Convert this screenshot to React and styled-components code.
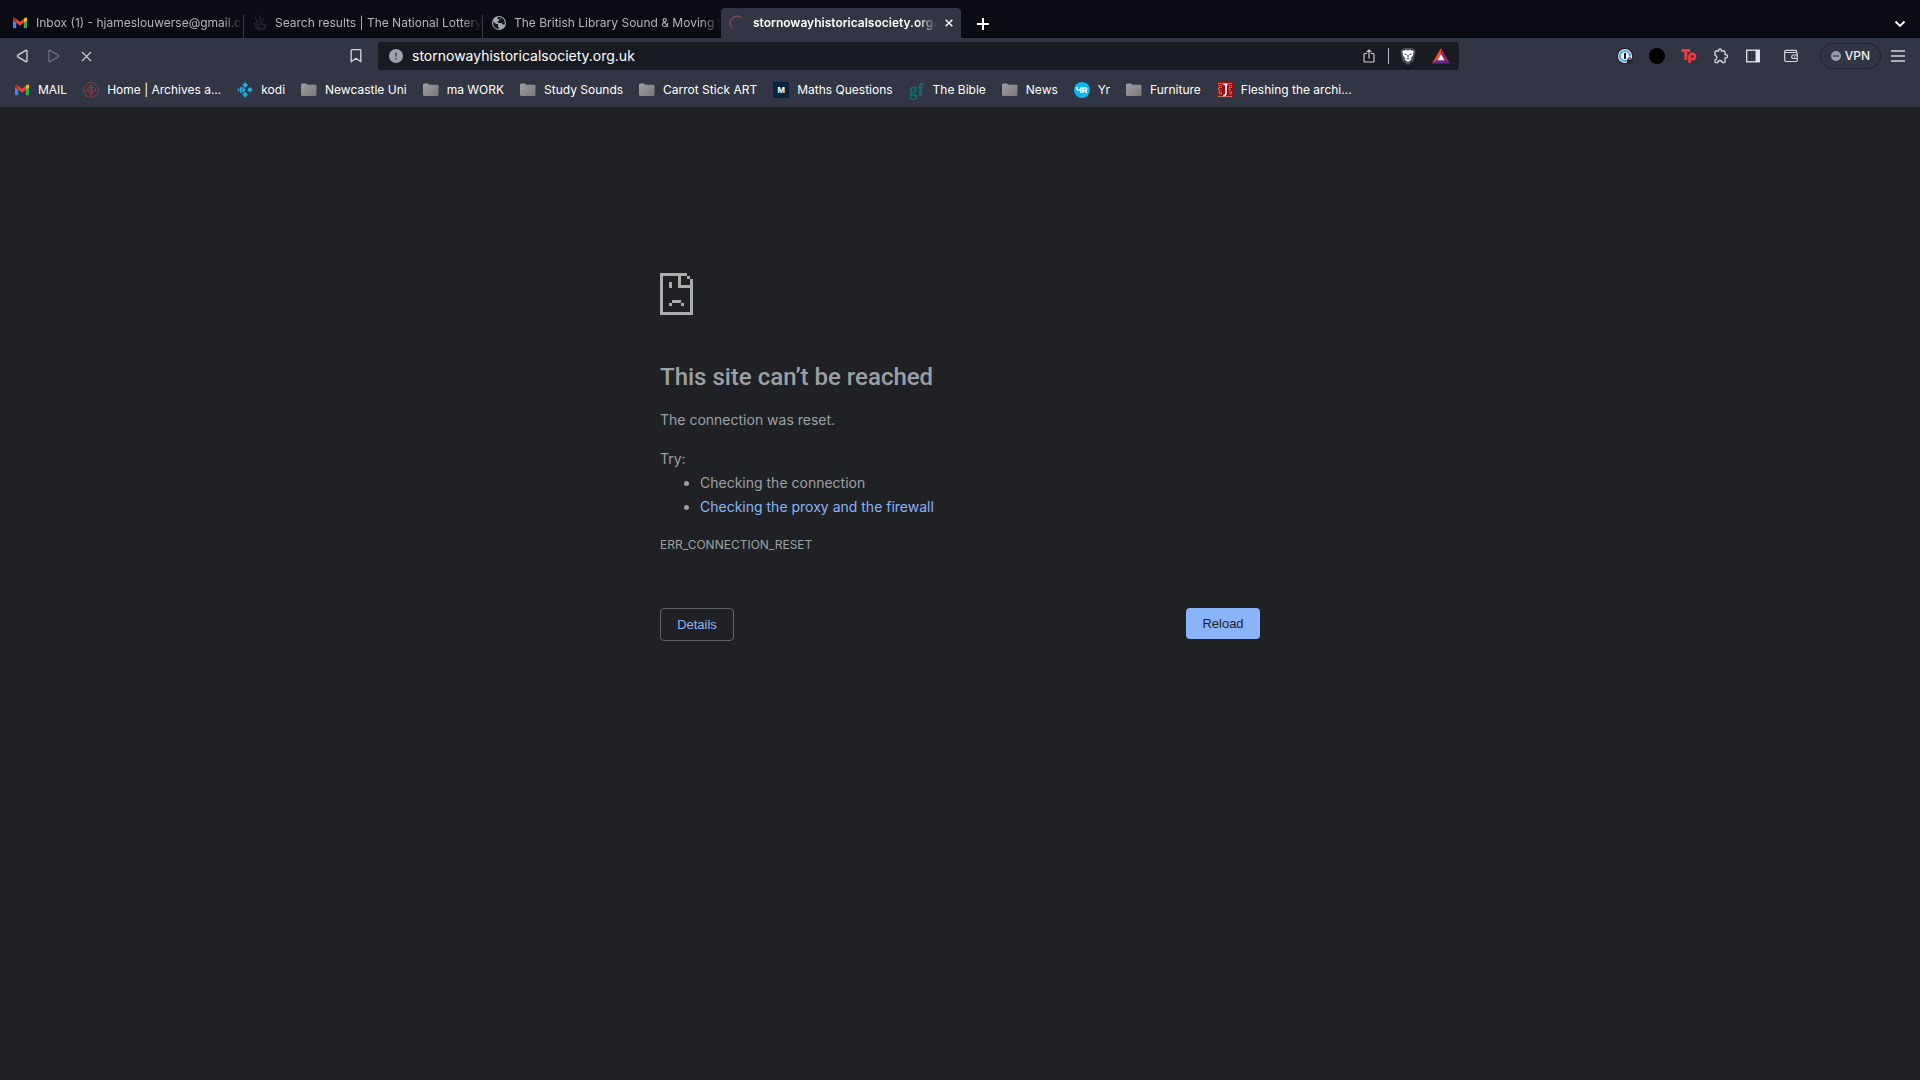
import React from "react";
import styled, { createGlobalStyle } from "styled-components";

const GlobalStyle = createGlobalStyle`
  body {
    margin: 0;
    background: #202124;
    font-family: Inter, "Liberation Sans", sans-serif;
  }
`;

const Browser = styled.div`
  display: flex;
  flex-direction: column;
  min-height: 100vh;

  svg {
    display: block;
    flex: none;
  }
`;

const IconButton = styled.button`
  display: flex;
  align-items: center;
  justify-content: center;
  width: ${(props) => props.$width || 32}px;
  height: 28px;
  padding: 0;
  border: 0;
  background: none;
  color: ${(props) => props.$color || "#d5d6db"};
`;

const TabStrip = styled.div`
  display: flex;
  align-items: flex-end;
  height: 38px;
  padding: 0 4px;
  background: #0b0b14;
`;

const Tab = styled.div`
  display: flex;
  align-items: center;
  box-sizing: border-box;
  flex: 0 1 ${(props) => (props.$active ? 240 : 239)}px;
  min-width: 0;
  height: ${(props) => (props.$active ? 30 : 23)}px;
  padding: ${(props) => (props.$active ? "0 0 0 8px" : "0 0 7px 8px")};
  border-left: ${(props) => (props.$divided ? 1 : 0)}px solid #3a3b42;
  border-radius: ${(props) => (props.$active ? "4px 4px 0 0" : "0")};
  background: ${(props) => (props.$active ? "#323543" : "transparent")};
`;

const TabTitle = styled.button`
  flex: 1;
  min-width: 0;
  margin-left: ${(props) => (props.$divided ? 7 : 8)}px;
  padding: 0;
  border: 0;
  background: none;
  color: ${(props) => (props.$active ? "#ffffff" : "#b4b4b9")};
  font: ${(props) => (props.$active ? 600 : 400)} 12px/16px Inter, sans-serif;
  text-align: left;
  white-space: nowrap;
  overflow: hidden;
  mask-image: linear-gradient(to left, transparent, #000 20px);
`;

const Spacer = styled.div`
  flex: 1;
`;

const Toolbar = styled.div`
  display: grid;
  grid-template-columns: 378px 1fr 461px;
  align-items: center;
  height: 36px;
  background: #323543;
`;

const ToolGroup = styled.div`
  display: flex;
  align-items: center;
  justify-content: ${(props) => (props.$end ? "flex-end" : "flex-start")};
  padding: ${(props) => (props.$end ? "0 8px 0 0" : "0 6px")};
`;

const AddressBar = styled.div`
  display: flex;
  align-items: center;
  height: 28px;
  padding: 0 1px 0 11px;
  border-radius: 4px;
  background: #191b22;
`;

const AddressInput = styled.input`
  flex: 1;
  min-width: 0;
  padding: 0;
  margin-left: 9px;
  border: 0;
  outline: 0;
  background: none;
  color: #ffffff;
  font: 400 14px/20px Inter, sans-serif;
`;

const Divider = styled.div`
  width: 1px;
  height: 16px;
  margin: 0 3px;
  background: #b6b7bc;
`;

const VpnButton = styled.button`
  display: flex;
  align-items: center;
  gap: 4px;
  height: 26px;
  margin: 0 3px 0 7px;
  padding: 0 10px;
  border: 1px solid #222430;
  border-radius: 13px;
  background: none;
  color: #f0f0f4;
  font: 500 12px/16px Inter, sans-serif;
`;

const BookmarkBar = styled.nav`
  display: flex;
  align-items: center;
  box-sizing: border-box;
  gap: 16px;
  height: 33px;
  padding: 0 14px 2px;
  background: #323543;
`;

const Bookmark = styled.a`
  display: flex;
  align-items: center;
  gap: 8px;
  color: #ffffff;
  font-size: 12px;
  line-height: 16px;
  text-decoration: none;
  white-space: nowrap;
`;

const ErrorPage = styled.main`
  box-sizing: border-box;
  width: 100%;
  max-width: 600px;
  margin: 0 auto;
  padding-top: 166px;
  color: #9aa0a6;
  font-size: 14px;
  line-height: 24px;
`;

const Title = styled.h1`
  margin: 48px 0 17px;
  font-family: Roboto, sans-serif;
  font-size: 24px;
  font-weight: 500;
  line-height: 28px;
`;

const Message = styled.p`
  margin: 0;
`;

const Suggestions = styled.div`
  margin-top: 15px;

  ul {
    margin: 0;
    padding-left: 40px;
  }

  a {
    color: #8ab4f8;
    text-decoration: none;
  }
`;

const ErrorCode = styled.div`
  margin-top: 16px;
  font-size: 12px;
  line-height: 20px;
`;

const Actions = styled.div`
  display: flex;
  align-items: flex-start;
  justify-content: space-between;
  margin-top: 53px;
`;

const ActionButton = styled.button`
  box-sizing: border-box;
  width: 74px;
  height: ${(props) => (props.$primary ? 31 : 33)}px;
  padding: 0;
  border: ${(props) => (props.$primary ? "0" : "1px solid #5f6368")};
  border-radius: 4px;
  background: ${(props) => (props.$primary ? "#8ab4f8" : "transparent")};
  color: ${(props) => (props.$primary ? "#202124" : "#8ab4f8")};
  font: 400 13px/16px "Liberation Sans", Arial, sans-serif;
`;

const Gmail = () => (
  <svg width="16" height="16" viewBox="0 0 16 16">
    <path d="M1 4v8.500q0 .8.800.8H4.200V7z" fill="#4285f4" />
    <path d="M15 4v8.500q0 .8-.800.8H11.800V7z" fill="#34a853" />
    <path d="M11.800 3.800v4L15 5.400V4q0-1.900-1.900-1.200z" fill="#fbbc04" />
    <path d="M4.200 3.800v4L1 5.400V4q0-1.900 1.900-1.200z" fill="#c5221f" />
    <path d="M4.200 3.800 8 6.700l3.800-2.900v4L8 10.700 4.200 7.800z" fill="#ea4335" />
  </svg>
);

const Lottery = () => (
  <svg width="16" height="16" viewBox="0 0 16 16" fill="none" stroke="#24242b" strokeWidth="1.400" strokeLinecap="round">
    <path d="M5 8 3.500 2.500M7 7.500 8.500 1M9 8l2.500-4.500M2 8.500l3 1.500M13.500 9.500c0 3.500-2 5.500-5 5.500S4 13.500 3 11.500M6 10.500q2-2.500 5-1t1 3.500q-2 .8-4-.5M5 12l2.500 1" />
  </svg>
);

const Globe = () => (
  <svg width="16" height="16" viewBox="0 0 16 16">
    <circle cx="8" cy="8" r="7" fill="#a5a9b1" />
    <path d="M2.500 6.500 5 9h2v2.500l1.500 2.300C4 14.200 1.500 11 2.500 6.500zM6 3.500c.5-1.200 2-1.700 3.500-1.300l.5 1.600-2 1v1.500H6.500L7 8h3.500l1 1.500h2.200C14.400 6 12.500 3 10 2.200L8.500 4.500z" fill="#16161f" />
  </svg>
);

const Spinner = () => (
  <svg width="16" height="16" viewBox="0 0 16 16" fill="none">
    <path d="M3.600 13.500A7 7 0 0 1 12.500 2.700" stroke="#84454f" strokeWidth="1.400" />
  </svg>
);

const Cross = ({ size, width }) => (
  <svg width={size} height={size} viewBox="0 0 10 10" stroke="currentColor" strokeWidth={width}>
    <path d="M.8.8l8.400 8.400M9.200.8.8 9.200" />
  </svg>
);

const Plus = () => (
  <svg width="12" height="12" viewBox="0 0 12 12" stroke="#fff" strokeWidth="2">
    <path d="M6 0v12M0 6h12" />
  </svg>
);

const Chevron = () => (
  <svg width="12" height="8" viewBox="0 0 12 8" fill="none" stroke="#fff" strokeWidth="1.800">
    <path d="M1.500 1.500 6 6l4.500-4.500" />
  </svg>
);

const Triangle = ({ forward }) => (
  <svg width="12" height="14" viewBox="0 0 12 14" fill="none" stroke="currentColor" strokeWidth="1.300" strokeLinejoin="round">
    {forward ? (
      <path d="M1 2q0-1.200 1.100-.6l8 4.700q1.100.9 0 1.800l-8 4.700Q1 13.200 1 12z" />
    ) : (
      <path d="M11 2q0-1.200-1.100-.6l-8 4.700q-1.100.9 0 1.800l8 4.700q1.100.6 1.100-.6z" />
    )}
  </svg>
);

const BookmarkIcon = () => (
  <svg width="12" height="14" viewBox="0 0 12 14" fill="none" stroke="currentColor" strokeWidth="1.300">
    <path d="M1.200 1.500q0-.8.800-.8h8q.8 0 .8.800v11.300L6 9.300l-4.800 3.500z" strokeLinejoin="round" />
  </svg>
);

const Info = () => (
  <svg width="14" height="14" viewBox="0 0 14 14">
    <circle cx="7" cy="7" r="7" fill="#a0a1aa" />
    <path d="M7 3.500v4M7 9v1.500" stroke="#4c4e59" strokeWidth="1.600" />
  </svg>
);

const Share = () => (
  <svg width="12" height="14" viewBox="0 0 12 14" fill="none" stroke="currentColor" strokeWidth="1.100">
    <path d="M4 4.500H2q-1 0-1 1V12q0 1 1 1h8q1 0 1-1V5.500q0-1-1-1H8M6 9.500V1M3.800 3 6 .9 8.200 3" />
  </svg>
);

const Shield = () => (
  <svg width="16" height="18" viewBox="0 0 16 18">
    <path d="M4 1h8l1.300 1.300 1.700.4.500 2.300-1.700 7.500q-.5 1.500-1.800 2.400L8 17.700l-4-2.800q-1.300-.9-1.800-2.400L.5 5 1 2.700l1.700-.4z" fill="#4f5163" />
    <path d="M5.500 3 8 3.500 10.500 3l1.300.7 1.400-.1.500 1.600-.8 1.700.2 1.600-2.300 2.500.4 1.500L8 15l-3.200-2.500.4-1.500-2.300-2.500.2-1.600-.8-1.700.5-1.600 1.400.1z" fill="#fff" />
    <path d="m4.300 6.300 2.600.7-.6 1.300-1.400-.5zM11.700 6.300 9.100 7l.6 1.300 1.400-.5zM7.300 8h1.400v2.200L8 10.700l-.7-.5zM6 11.700l2-.8 2 .8-2 .8z" fill="#5a5c6c" />
  </svg>
);

const Bat = () => (
  <svg width="18" height="16" viewBox="0 0 18 16">
    <path d="M9 0v6L5.500 12 0 15.500z" fill="#ff4724" />
    <path d="M9 0l9 15.500L12.500 12 9 6z" fill="#9e1f63" />
    <path d="M0 15.500 5.500 12h7l5.500 3.500z" fill="#662d91" />
    <path d="m9 6 3.500 6.200h-7z" fill="#fff" />
  </svg>
);

const OnePassword = () => (
  <svg width="16" height="16" viewBox="0 0 16 16">
    <circle cx="8" cy="8" r="7.800" fill="#1c1d24" />
    <circle cx="8" cy="8" r="7" fill="#f4f5f8" />
    <circle cx="8" cy="8" r="5" fill="none" stroke="#4a9ff0" strokeWidth="2.200" />
    <path d="M8 5v6" stroke="#202127" strokeWidth="2" />
    <path d="M9.500 8.500H15V12H9.500z" fill="#f4f5f8" />
    <path d="M10 11.500h5.500V16H10z" fill="#25262c" />
    <path d="M11.200 12v-1.300q1.500-1.800 3 0V12" fill="none" stroke="#25262c" strokeWidth="1.100" />
  </svg>
);

const Dot = () => (
  <svg width="16" height="16" viewBox="0 0 16 16">
    <circle cx="8" cy="8" r="8" fill="#000" />
  </svg>
);

const Tp = () => (
  <svg width="16" height="16" viewBox="0 0 16 16" fill="none" stroke="#f3393b" strokeWidth="3">
    <path d="M.5 2.500h8.700M4.800 2.500V12" />
    <circle cx="11.300" cy="8.500" r="2.700" strokeWidth="2.600" />
    <path d="M8.600 8v7" strokeWidth="2.600" />
  </svg>
);

const Puzzle = () => (
  <svg width="16" height="16" viewBox="0 0 16 16" fill="none" stroke="currentColor" strokeWidth="1.300" strokeLinejoin="round">
    <path d="M2 4q0-1 1-1h2.700q-.5-2 1.300-2t1.300 2H11q1 0 1 1v2.700q2.500-.5 2.500 1.500T12 9.900V14q0 .7-.8.700H9.300Q9.200 12.500 7 12.500T4.700 14.700H2.800Q2 14.700 2 14v-2.200q2-.3 2-2.100T2 7.500z" />
  </svg>
);

const Sidebar = () => (
  <svg width="14" height="14" viewBox="0 0 14 14">
    <rect x=".7" y="1.200" width="12.600" height="11.600" fill="none" stroke="#e3e4e8" strokeWidth="1.300" />
    <path d="M9.500 1H14v12H9.500z" fill="#e3e4e8" />
  </svg>
);

const Wallet = () => (
  <svg width="14" height="14" viewBox="0 0 14 14" fill="none" stroke="currentColor" strokeWidth="1.200">
    <path d="M12.500 3.500V2q0-.6-.8-.6H2Q.7 1.400.7 2.500v8.800q0 1.200 1.200 1.200h10.200q1.200 0 1.200-1.200V4.700q0-1.200-1.200-1.200H2q-1.300 0-1.300-1M13.300 6H9.500q-1.800 0-1.800 1.800t1.800 1.700h3.800M10 7.800h1.200" />
  </svg>
);

const VpnOff = () => (
  <svg width="10" height="10" viewBox="0 0 10 10">
    <circle cx="5" cy="5" r="5" fill="#9a9bb0" />
    <path d="M2 5h6" stroke="#323543" strokeWidth="1.200" />
  </svg>
);

const Menu = () => (
  <svg width="14" height="12" viewBox="0 0 14 12" stroke="currentColor" strokeWidth="1.400">
    <path d="M0 1h14M0 6h14M0 11h14" />
  </svg>
);

const Archives = () => (
  <svg width="16" height="16" viewBox="0 0 16 16" fill="none" stroke="#8c3d42">
    <circle cx="8" cy="8" r="7.400" />
    <path d="M8 3.500v9M6.500 3.500h3M6.500 12.500h3M8 5.500c-3-1-4.500.5-4.500 2.300S5 10.500 8 10M8 5.500c3-.8 4.500.5 4.500 2.300S11 10.500 8 10M5 8h2M9.500 7v2" />
  </svg>
);

const Kodi = () => (
  <svg width="16" height="16" viewBox="0 0 16 16" fill="#17b2e7">
    <path d="M8.200.3 11 3.100 8.200 5.900 5.400 3.100zM12.900 5l2.800 2.800-2.800 2.800-2.800-2.800zM8.200 9.700 11 12.500l-2.800 3.200-2.800-3.200zM4.700 4v8L2.800 10V6zM5.400 4.500 8.800 7.800 5.400 11.200zM.3 7.900l1.800-1.800v3.600z" />
  </svg>
);

const Folder = () => (
  <svg width="16" height="16" viewBox="0 0 16 16">
    <defs>
      <linearGradient id="folder" x1="0" y1="0" x2="1" y2="1">
        <stop offset="0" stopColor="#a2a2a5" />
        <stop offset="1" stopColor="#77777a" />
      </linearGradient>
    </defs>
    <path d="M0 3q0-1.500 1.300-1.500H5l1.300 1.300h7.900q1.300 0 1.300 1.300v8.600q0 1.300-1.300 1.300H1.300Q0 14 0 12.700z" fill="url(#folder)" />
    <path d="M0 4.200h15.500" stroke="#8b8b8e" strokeWidth=".6" />
  </svg>
);

const LetterMark = styled.span`
  display: flex;
  align-items: center;
  justify-content: center;
  width: 16px;
  height: 16px;
  background: ${(props) => props.$background || "transparent"};
  color: ${(props) => props.$color || "#ffffff"};
  font: 700 ${(props) => props.$size || 8}px/16px ${(props) => props.$family || "Inter"}, sans-serif;
`;

const Yr = () => (
  <svg width="16" height="16" viewBox="0 0 16 16" fill="none" stroke="#fff" strokeWidth="1.400">
    <circle cx="8" cy="8" r="8" fill="#06b9ef" stroke="none" />
    <path d="M3 5v1.700q0 1.300 1.300 1.300h2.400M7 5v6M9 11V5.700h2.300q1.500 0 1.500 1.400T11.300 8.500H9M11 8.500l1.800 2.500" />
  </svg>
);

const Jstor = () => (
  <svg width="16" height="16" viewBox="0 0 16 16" fill="none">
    <path d="M0 0h16v16H0z" fill="#990d10" />
    <path d="M1 1.500h14M1.500 3.500h3v2h-3v2.500h3M1.500 10h3v2H2M11.500 3.500h3v2H12v2.500h2.500M12 10h2.500v2H12M1 14.500h14" stroke="#d98c86" strokeWidth="1" strokeDasharray="1.500 .6" />
    <path d="M6.500 2.500h4M9 2.500v8.700q0 2.300-2.700 2.300" stroke="#fff" strokeWidth="1.600" />
  </svg>
);

const tabs = [
  { title: "Inbox (1) - hjameslouwerse@gmail.com", icon: <Gmail /> },
  { title: "Search results | The National Lottery", icon: <Lottery /> },
  { title: "The British Library Sound & Moving Image", icon: <Globe /> },
  { title: "stornowayhistoricalsociety.org.uk", icon: <Spinner />, active: true },
];

const bookmarks = [
  { label: "MAIL", icon: <Gmail /> },
  { label: "Home | Archives a...", icon: <Archives /> },
  { label: "kodi", icon: <Kodi /> },
  { label: "Newcastle Uni", icon: <Folder /> },
  { label: "ma WORK", icon: <Folder /> },
  { label: "Study Sounds", icon: <Folder /> },
  { label: "Carrot Stick ART", icon: <Folder /> },
  { label: "Maths Questions", icon: <LetterMark $background="#06253f">M</LetterMark> },
  {
    label: "The Bible",
    icon: (
      <LetterMark $color="#0d6b68" $size={18} $family="'Liberation Serif'">
        gf
      </LetterMark>
    ),
  },
  { label: "News", icon: <Folder /> },
  { label: "Yr", icon: <Yr /> },
  { label: "Furniture", icon: <Folder /> },
  { label: "Fleshing the archi...", icon: <Jstor /> },
];

const SadPage = () => (
  <svg width="33" height="42" viewBox="0 0 11 14" fill="#acacac" shapeRendering="crispEdges">
    <path d="M0 0h9v1h1v1h1v12H0zM1 1v12h9V5H6V1zM7 1v3h3V2H9V1z" fillRule="evenodd" />
    <path d="M3 3h1v2H3zM4 9h3v1H4zM3 10h1v1H3zM7 10h1v1H7z" />
  </svg>
);

export default function App() {
  return (
    <Browser>
      <GlobalStyle />
      <TabStrip>
        {tabs.map((tab, index) => {
          const divided = index > 0 && !tab.active;
          return (
            <Tab key={tab.title} $active={tab.active} $divided={divided}>
              {tab.icon}
              <TabTitle $active={tab.active} $divided={divided}>
                {tab.title}
              </TabTitle>
              {tab.active && (
                <IconButton $width={24} $color="#fff" aria-label="Close tab">
                  <Cross size={8} width={1.8} />
                </IconButton>
              )}
            </Tab>
          );
        })}
        <IconButton $width={44} aria-label="New tab">
          <Plus />
        </IconButton>
        <Spacer />
        <IconButton aria-label="Search tabs">
          <Chevron />
        </IconButton>
      </TabStrip>
      <Toolbar>
        <ToolGroup>
          <IconButton aria-label="Back">
            <Triangle />
          </IconButton>
          <IconButton $color="#6d6f7c" aria-label="Forward">
            <Triangle forward />
          </IconButton>
          <IconButton aria-label="Stop">
            <Cross size={11} width={1.2} />
          </IconButton>
          <Spacer />
          <IconButton aria-label="Bookmark this page">
            <BookmarkIcon />
          </IconButton>
        </ToolGroup>
        <AddressBar>
          <Info />
          <AddressInput aria-label="Address" defaultValue="stornowayhistoricalsociety.org.uk" />
          <IconButton aria-label="Share">
            <Share />
          </IconButton>
          <Divider />
          <IconButton aria-label="Shields">
            <Shield />
          </IconButton>
          <IconButton $width={34} aria-label="Rewards">
            <Bat />
          </IconButton>
        </AddressBar>
        <ToolGroup $end>
          <IconButton aria-label="1Password">
            <OnePassword />
          </IconButton>
          <IconButton aria-label="Extension">
            <Dot />
          </IconButton>
          <IconButton aria-label="Teleparty">
            <Tp />
          </IconButton>
          <IconButton aria-label="Extensions">
            <Puzzle />
          </IconButton>
          <IconButton aria-label="Sidebar">
            <Sidebar />
          </IconButton>
          <IconButton $width={44} aria-label="Wallet">
            <Wallet />
          </IconButton>
          <VpnButton>
            <VpnOff />
            VPN
          </VpnButton>
          <IconButton $width={28} aria-label="Menu">
            <Menu />
          </IconButton>
        </ToolGroup>
      </Toolbar>
      <BookmarkBar>
        {bookmarks.map((bookmark) => (
          <Bookmark key={bookmark.label} href="#">
            {bookmark.icon}
            {bookmark.label}
          </Bookmark>
        ))}
      </BookmarkBar>
      <ErrorPage>
        <SadPage />
        <Title>This site can’t be reached</Title>
        <Message>The connection was reset.</Message>
        <Suggestions>
          <Message>Try:</Message>
          <ul>
            <li>Checking the connection</li>
            <li>
              <a href="#">Checking the proxy and the firewall</a>
            </li>
          </ul>
        </Suggestions>
        <ErrorCode>ERR_CONNECTION_RESET</ErrorCode>
        <Actions>
          <ActionButton>Details</ActionButton>
          <ActionButton $primary>Reload</ActionButton>
        </Actions>
      </ErrorPage>
    </Browser>
  );
}
